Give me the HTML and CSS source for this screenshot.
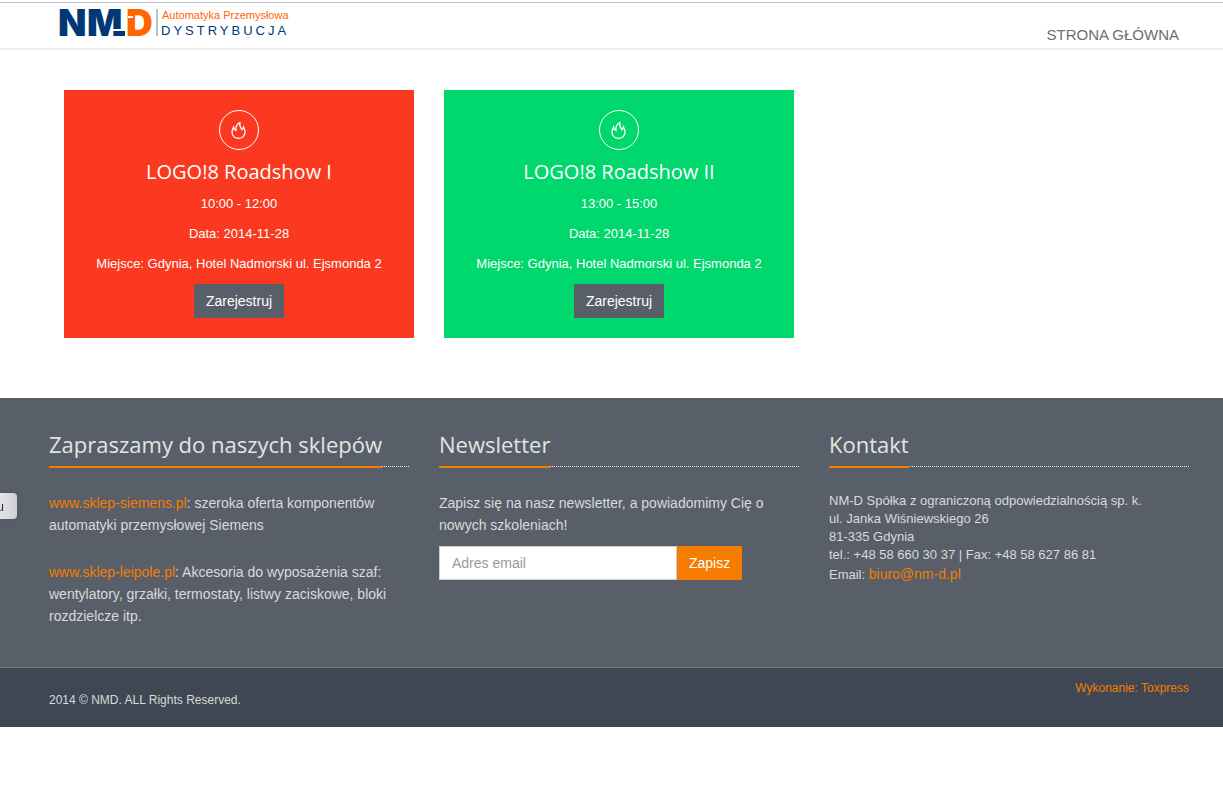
FILE: index.html
```html
<!DOCTYPE html>
<html lang="pl">
<head>
<meta charset="utf-8">
<meta name="viewport" content="width=device-width, initial-scale=1">
<title>NMD Szkolenia</title>
<link rel="stylesheet" href="styles.css">
</head>

<body>

<header class="header">
  <div class="container">
    <a class="logo" href="#" aria-label="NMD Automatyka Przemysłowa Dystrybucja">
      <svg width="240" height="36" viewBox="0 0 240 36">
        <g class="logo-mark">
          <text x="-1" y="32">N</text>
          <text x="28" y="32">M</text>
          <text class="orange" x="67" y="32">D</text>
        </g>
        <path d="M54 26h13M69 13h5" stroke="#fff" stroke-width="2"/>
        <path d="M59 27h7v5h-7z" fill="#003876"/>
        <path d="M98 5v27" stroke="#6d87a0"/>
        <text class="logo-top" x="103" y="15">Automatyka Przemysłowa</text>
        <text class="logo-bottom" x="102" y="31">DYSTRYBUCJA</text>
      </svg>
    </a>
    <nav class="nav"><a href="#">STRONA GŁÓWNA</a></nav>
  </div>
</header>

<main class="container">
  <div class="events">
    <section class="event red">
      <svg class="event-icon" width="40" height="40" viewBox="0 0 40 40">
        <circle cx="20" cy="20" r="19.5"/>
        <path d="M20.800 12.700c-3 1.500-4.300 4.500-3.800 7.800-1.500-.5-2.300-1.700-2.500-3.500-1.300 2-1.500 3.500-1.500 5 0 3.800 2.800 6.300 6.500 6.300s6.500-2.500 6.500-6c0-1.800-.5-3.500-1.500-5.300-.2 1.200-.6 2-1.500 2.800-1.700-2-2.600-4-2.200-7.100z"/>
      </svg>
      <h2>LOGO!8 Roadshow I</h2>
      <p>10:00 - 12:00</p>
      <p>Data: 2014-11-28</p>
      <p>Miejsce: Gdynia, Hotel Nadmorski ul. Ejsmonda 2</p>
      <button class="btn" type="button">Zarejestruj</button>
    </section>
    <section class="event green">
      <svg class="event-icon" width="40" height="40" viewBox="0 0 40 40">
        <circle cx="20" cy="20" r="19.5"/>
        <path d="M20.800 12.700c-3 1.500-4.300 4.500-3.800 7.800-1.500-.5-2.300-1.700-2.500-3.500-1.300 2-1.500 3.500-1.500 5 0 3.800 2.800 6.300 6.500 6.300s6.500-2.500 6.500-6c0-1.800-.5-3.500-1.500-5.300-.2 1.200-.6 2-1.500 2.800-1.700-2-2.600-4-2.200-7.100z"/>
      </svg>
      <h2>LOGO!8 Roadshow II</h2>
      <p>13:00 - 15:00</p>
      <p>Data: 2014-11-28</p>
      <p>Miejsce: Gdynia, Hotel Nadmorski ul. Ejsmonda 2</p>
      <button class="btn" type="button">Zarejestruj</button>
    </section>
  </div>
</main>

<footer class="footer">
  <div class="container footer-cols">
    <section>
      <div class="headline"><h2>Zapraszamy do naszych sklepów</h2></div>
      <p class="shop"><a href="#">www.sklep-siemens.pl</a>: szeroka oferta komponentów automatyki przemysłowej Siemens</p>
      <p class="shop"><a href="#">www.sklep-leipole.pl</a>: Akcesoria do wyposażenia szaf: wentylatory, grzałki, termostaty, listwy zaciskowe, bloki rozdzielcze itp.</p>
    </section>
    <section>
      <div class="headline"><h2>Newsletter</h2></div>
      <p>Zapisz się na nasz newsletter, a powiadomimy Cię o nowych szkoleniach!</p>
      <form class="newsletter">
        <input type="email" placeholder="Adres email" aria-label="Adres email">
        <button class="btn btn-orange" type="button">Zapisz</button>
      </form>
    </section>
    <section>
      <div class="headline"><h2>Kontakt</h2></div>
      <address>
        NM-D Spółka z ograniczoną odpowiedzialnością sp. k.<br>
        ul. Janka Wiśniewskiego 26<br>
        81-335 Gdynia<br>
        tel.: +48 58 660 30 37 | Fax: +48 58 627 86 81<br>
        Email: <a href="#">biuro@nm-d.pl</a>
      </address>
    </section>
  </div>
</footer>

<div class="copyright">
  <div class="container">
    <p>2014 © NMD. ALL Rights Reserved.</p>
    <a href="#">Wykonanie: Toxpress</a>
  </div>
</div>

<button class="side-tab" type="button">u</button>

</body>
</html>
```
FILE: styles.css
```css
* {
  box-sizing: border-box;
}

body {
  margin: 0;
  background: #fff;
  color: #555;
  font: 14px/20px "Liberation Sans", Arial, sans-serif;
}

h2, p {
  margin: 0;
  font-weight: normal;
}

h2 {
  font-family: "Open Sans", sans-serif;
}

a {
  color: #f57c00;
  text-decoration: none;
}

.container {
  box-sizing: content-box;
  max-width: 1140px;
  margin: 0 auto;
  padding-left: 15px;
}

/* header */
.header {
  margin-top: 2px;
  border-top: 1px solid #b4bfca;
  border-bottom: 2px solid #eee;
}

.header .container {
  display: flex;
  justify-content: space-between;
  height: 45px;
}

.logo {
  padding: 1px 0 0 10px;
}

.logo svg {
  display: block;
}

.logo-mark text {
  font: 900 37px Inter, "Liberation Sans", sans-serif;
  fill: #003876;
}

.logo-mark .orange {
  fill: #ff6600;
}

.logo-top {
  font: 11px "Liberation Sans", Arial, sans-serif;
  fill: #ff6600;
}

.logo-bottom {
  font: 13px "Liberation Sans", Arial, sans-serif;
  letter-spacing: 3px;
  fill: #003876;
}

.nav {
  padding: 22px 10px 0 0;
}

.nav a {
  color: #687074;
  font-size: 15px;
}

/* events */
.events {
  display: grid;
  grid-template-columns: repeat(3, 1fr);
  gap: 30px;
  padding: 40px 15px 60px;
}

.event {
  padding: 20px;
  color: #fff;
  font-size: 13px;
  text-align: center;
}

.red {
  background: #fa3920;
}

.green {
  background: #00d76c;
}

.event-icon {
  display: block;
  margin: 0 auto 8px;
  fill: none;
  stroke: #fff;
}

.event-icon path {
  stroke-width: 1.3;
}

.event h2 {
  margin-bottom: 8px;
  font-size: 20px;
  line-height: 28px;
}

.event p {
  margin-bottom: 10px;
}

.btn {
  height: 34px;
  padding: 0 12px;
  border: 0;
  background: #585f69;
  color: #fff;
  font: 14px "Liberation Sans", Arial, sans-serif;
}

.btn-orange {
  background: #f57c00;
}

/* footer */
.footer {
  padding: 30px 0 40px;
  background: #585f69;
  color: #dadada;
  line-height: 22px;
}

.footer-cols {
  display: grid;
  grid-template-columns: repeat(3, 1fr);
  gap: 30px;
}

.headline {
  margin-bottom: 25px;
  border-bottom: 1px dotted #e4e9f0;
}

.headline h2 {
  display: inline-block;
  margin-bottom: -2px;
  padding-bottom: 6px;
  border-bottom: 2px solid #f57c00;
  color: #e4e4e4;
  font-size: 22px;
  line-height: 32px;
  vertical-align: top;
}

.shop + .shop {
  margin-top: 25px;
}

.newsletter {
  display: flex;
  margin-top: 10px;
}

.newsletter input {
  width: 238px;
  height: 34px;
  padding: 0 12px;
  border: 1px solid #ccc;
  font: 14px "Liberation Sans", Arial, sans-serif;
}

.newsletter input::placeholder {
  color: #999;
}

address {
  font-size: 13px;
  font-style: normal;
  line-height: 18px;
}

address a {
  font-size: 14px;
  line-height: 20px;
}

.copyright {
  border-top: 1px solid #757983;
  background: #3e4753;
  color: #dadada;
  font-size: 12px;
}

.copyright .container {
  display: flex;
  justify-content: space-between;
  padding-top: 10px;
  padding-bottom: 17px;
}

.copyright p {
  margin-top: 12px;
}

.side-tab {
  position: fixed;
  top: 493px;
  left: 0;
  width: 17px;
  height: 26px;
  padding: 0 13px 0 0;
  border: 0;
  border-radius: 0 4px 4px 0;
  background: linear-gradient(to right, #e2e3e5, #cfd1d4);
  box-shadow: 0 0 3px #484f59;
  color: #333;
  font: 13px "Liberation Sans", Arial, sans-serif;
  direction: rtl;
}
```
